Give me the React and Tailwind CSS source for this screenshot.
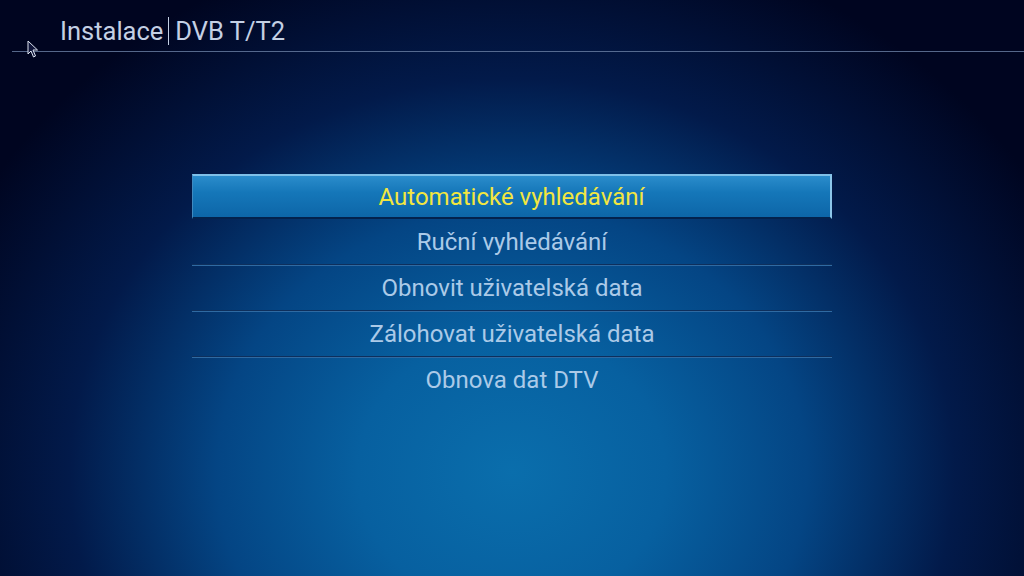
import React from 'react';

const items = [
    'Automatické vyhledávání',
    'Ruční vyhledávání',
    'Obnovit uživatelská data',
    'Zálohovat uživatelská data',
    'Obnova dat DTV',
];

const App = () => {
    return (
        <div className="relative w-[1024px] h-[576px] overflow-hidden font-['Roboto',sans-serif] bg-[#000418] bg-[radial-gradient(ellipse_60%_95%_at_50%_82%,#0a6eac_0%,#0760a0_25%,#044584_48%,#021a4a_72%,#000520_100%)]">
            {/* Header */}
            <header className="h-[51px] pl-[60px] pt-[16px]">
                <div className="flex items-center text-[25.5px] leading-[30px] text-[#c4d0e4]">
                    <span>Instalace</span>
                    <span className="w-px h-[28px] bg-[#c4d0e4] ml-[5px] mr-[6px]" />
                    <span>DVB T/T2</span>
                </div>
            </header>
            <div className="ml-[12px] h-px bg-[#6a7fa4]/80" />

            {/* Mouse cursor */}
            <svg className="absolute left-[27px] top-[40px]" width="12" height="19" viewBox="0 0 12 19">
                <path d="M1 1 L1 14 L4 11 L6.5 17 L8.5 16 L6 10 L10.5 10 Z" fill="#10163a" stroke="#dfe6f2" strokeWidth="1" strokeLinejoin="round" />
            </svg>

            {/* Menu */}
            <div className="mt-[122px] mx-auto w-[640px] flex flex-col">
                {items.map((label, i) => (
                    <div
                        key={label}
                        className={
                            i === 0
                                ? 'h-[45px] flex items-center justify-center text-[24px] text-[#f2e640] bg-[linear-gradient(180deg,#2a8ccb_0%,#1577b9_40%,#0d66a8_100%)] border-t-2 border-t-[#7fc0e8] border-r-2 border-r-[#8cc6ea] border-l border-l-[#3f8ac0] border-b-2 border-b-[#03224d]'
                                : 'h-[46px] flex items-center justify-center text-[24px] text-[#abcae8] ' +
                                  (i < items.length - 1 ? 'border-b border-b-[#0e2f5c] shadow-[0_1px_0_#2f6aa2]' : '')
                        }
                    >
                        {label}
                    </div>
                ))}
            </div>
        </div>
    );
};

export default App;
